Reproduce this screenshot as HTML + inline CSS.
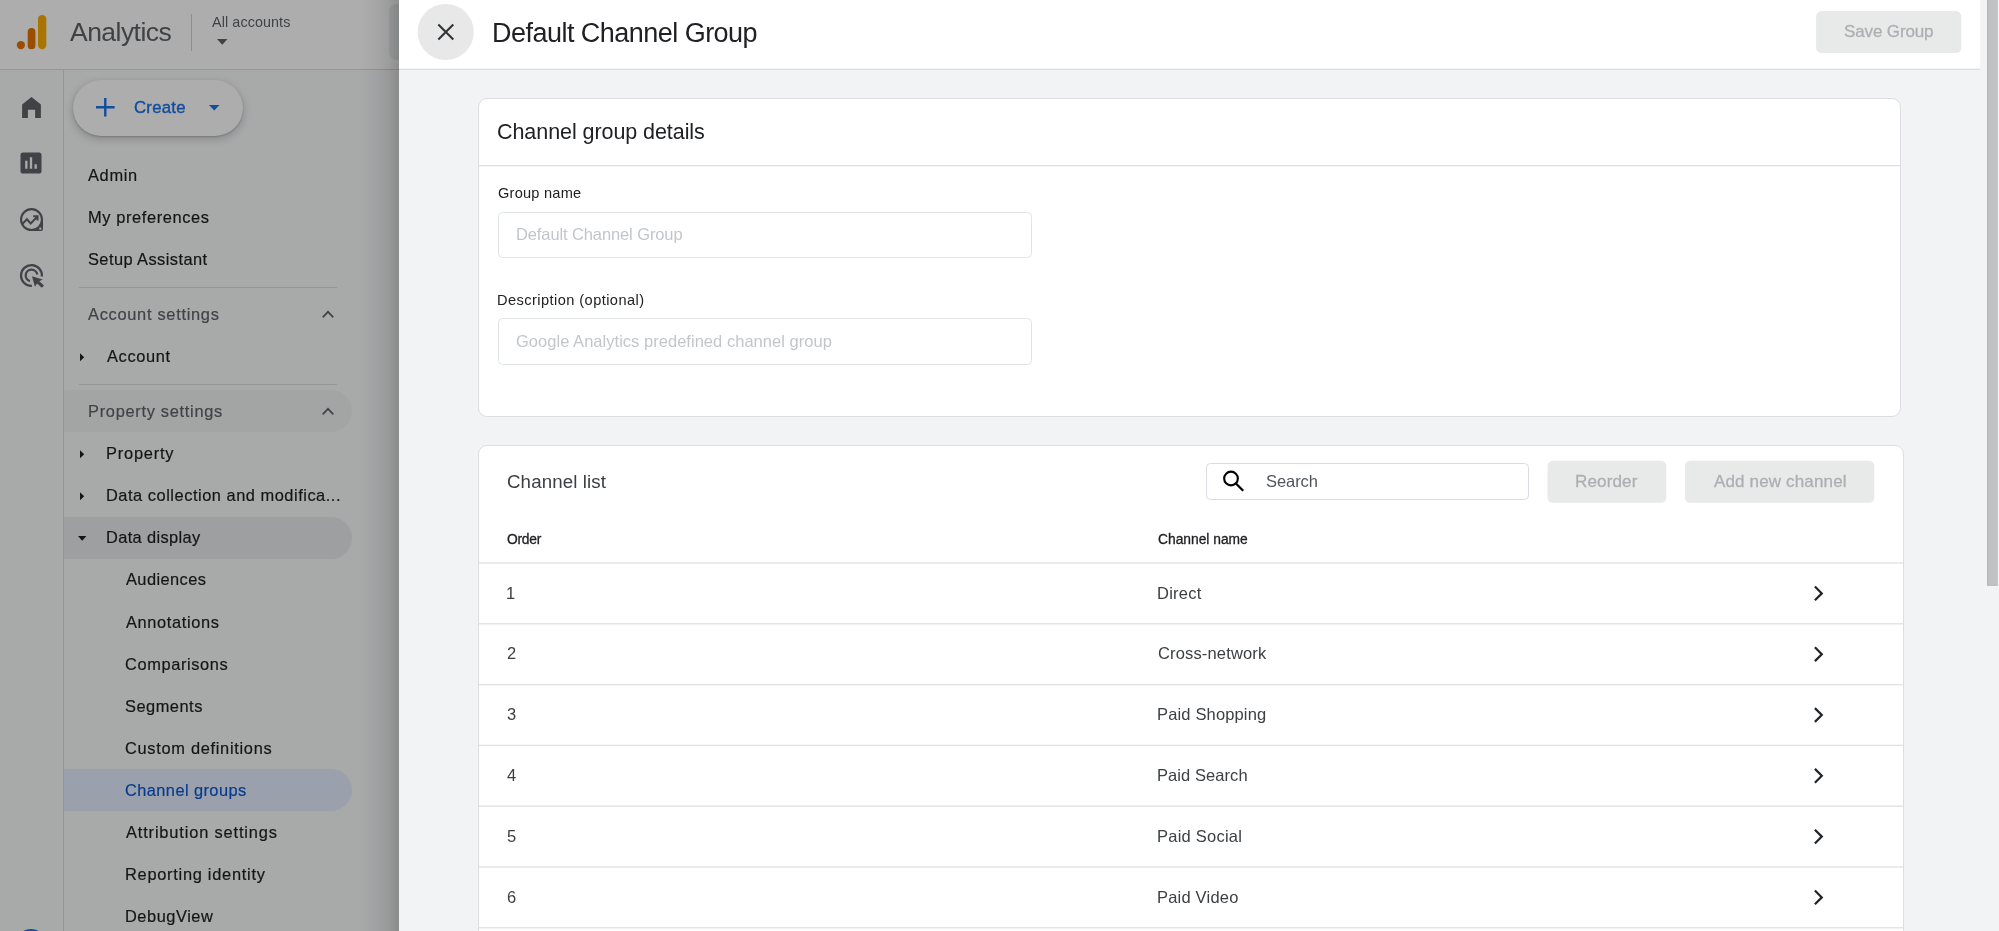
<!DOCTYPE html>
<html lang="en">
<head>
<meta charset="utf-8">
<title>Default Channel Group - Analytics</title>
<style>
html,body{margin:0;padding:0}
body{width:1999px;height:931px;overflow:hidden;position:relative;background:#f1f3f4;font-family:"Liberation Sans",sans-serif;}
.abs{position:absolute}
.t{position:absolute;white-space:nowrap;line-height:1;}
#left{position:absolute;left:0;top:0;width:399px;height:931px;overflow:hidden;background:#f8f9fa}
#lhead{position:absolute;left:0;top:0;width:399px;height:69px;background:#fff;border-bottom:1px solid #dadce0}
#rail{position:absolute;left:0;top:70px;width:63px;height:861px;border-right:1px solid #dadce0}
.pill{position:absolute;left:64px;width:288px;height:42px;border-radius:0 21px 21px 0}
.hr{position:absolute;left:79px;width:258px;height:1px;background:#dadce0}
#dim{position:absolute;left:0;top:0;width:399px;height:931px;background:rgba(0,0,0,.32)}
#shadow{position:absolute;left:359px;top:0;width:40px;height:931px;background:linear-gradient(to right,rgba(0,0,0,0),rgba(0,0,0,.03) 35%,rgba(0,0,0,.085) 70%,rgba(0,0,0,.18))}
#panel{position:absolute;left:399px;top:0;width:1600px;height:931px;background:#f1f3f4}
#phead{position:absolute;left:398px;top:0;width:1582px;height:69px;background:#fff;border-bottom:1px solid #dadce0}
.card{position:absolute;background:#fff;border:1px solid #dcdee2;border-radius:9px;box-sizing:border-box}
.inp{position:absolute;background:#fff;border:1px solid #e1e4e5;border-radius:4.5px;box-sizing:border-box}
.btn{position:absolute;background:#e8eaea;border-radius:5px}
.line{position:absolute;height:1px;background:#dadce0}
svg{position:absolute;overflow:visible}
</style>
</head>
<body>

<!-- ================= LEFT (dimmed app shell) ================= -->
<div id="left">
  <div id="lhead"></div>
  <div class="abs" style="left:389px;top:4px;width:60px;height:56px;border-radius:8px;background:#eef0f1"></div>
  <!-- logo -->
  <svg style="left:0;top:0" width="64" height="69" viewBox="0 0 64 69">
    <circle cx="20.9" cy="45.1" r="4.15" fill="#e37400"/>
    <rect x="27.7" y="28" width="7.7" height="21.25" rx="3.85" fill="#e37400"/>
    <rect x="38" y="14.9" width="8.3" height="34.35" rx="4.15" fill="#f9ab00"/>
  </svg>
  <div class="abs" style="left:191px;top:14px;width:1px;height:37px;background:#d0d2d6"></div>
  <svg style="left:217px;top:39.4px" width="10.5" height="5.8" viewBox="0 0 10.5 5.8"><path d="M0 0h10.5L5.25 5.8z" fill="#5f6368"/></svg>

  <div id="rail"></div>
  <!-- rail icons (28px material) -->
  <svg style="left:0;top:90px" width="64" height="40" viewBox="0 90 64 40"><path d="M22.1 118V104.6L31.5 97l9.4 7.6V118H35.1v-8.2h-7.2V118z" fill="#5f6368"/></svg>
  <svg style="left:17px;top:149.2px" width="28" height="28" viewBox="0 0 24 24"><path d="M19 3H5c-1.1 0-2 .9-2 2v14c0 1.1.9 2 2 2h14c1.1 0 2-.9 2-2V5c0-1.1-.9-2-2-2zM9 17H7v-7h2v7zm4 0h-2V7h2v10zm4 0h-2v-4h2v4z" fill="#5f6368"/></svg>
  <svg style="left:0;top:0" width="64" height="300" viewBox="0 0 64 300">
    <path fill="#5f6368" fill-rule="evenodd" d="M31.5 208.1A11.5 11.5 0 0 0 31.5 231.1H41A2 2 0 0 0 43 229.1V219.6A11.5 11.5 0 0 0 31.5 208.1zM31.5 210.2a9.4 9.4 0 1 1 0 18.8a9.4 9.4 0 1 1 0-18.8zM40.3 227.4a1.2 1.2 0 1 1 0 2.4a1.2 1.2 0 1 1 0-2.4z"/>
    <path fill="none" stroke="#5f6368" stroke-width="2" d="M22.5 223.9l4.4-4.6 3.8 4.2 6.6-6.9"/>
    <path fill="none" stroke="#5f6368" stroke-width="2.1" d="M33.2 216.2h4.3v4.4"/>
    <path fill="none" stroke="#5f6368" stroke-width="2.2" d="M41.9 276.5A10.45 10.45 0 1 0 31.86 285.94"/>
    <path fill="none" stroke="#5f6368" stroke-width="2.2" d="M37.3 274.5A5.85 5.85 0 1 0 29.9 281.1"/>
    <path fill="#5f6368" d="M32 276.3L42.7 279.4 39.3 281.2 44 285.6 41.8 287.8 37.1 283.4 34.9 286.8z"/>
  </svg>

  <!-- create pill -->
  <div class="abs" style="left:72.5px;top:79.5px;width:170.3px;height:56.6px;border-radius:28.3px;background:#fff;box-shadow:0 1px 2px rgba(0,0,0,.2),0 3px 7px 2px rgba(0,0,0,.13)"></div>
  <svg style="left:96px;top:98px" width="18.6" height="18.6" viewBox="0 0 18.6 18.6"><path d="M9.3 0v18.6M0 9.3h18.6" stroke="#1a73e8" stroke-width="2.4" fill="none"/></svg>
  <svg style="left:209.2px;top:105.4px" width="10.5" height="5.6" viewBox="0 0 10.5 5.6"><path d="M0 0h10.5L5.25 5.6z" fill="#1a73e8"/></svg>

  <!-- nav pills -->
  <div class="pill" style="top:390px;background:#f1f3f4"></div>
  <div class="pill" style="top:516.7px;background:#e8eaed"></div>
  <div class="pill" style="top:768.8px;height:42.6px;background:#e4eefe"></div>
  <div class="hr" style="top:287px"></div>
  <div class="hr" style="top:384px"></div>
  <!-- section chevrons -->
  <svg style="left:321.5px;top:309.7px" width="12" height="8" viewBox="0 0 12 8"><path d="M.7 7.3l5.3-5.5 5.3 5.5" fill="none" stroke="#5f6368" stroke-width="1.7"/></svg>
  <svg style="left:321.5px;top:406.7px" width="12" height="8" viewBox="0 0 12 8"><path d="M.7 7.3l5.3-5.5 5.3 5.5" fill="none" stroke="#5f6368" stroke-width="1.7"/></svg>
  <!-- tree arrows -->
  <svg style="left:80.2px;top:353.1px" width="4.2" height="8.3" viewBox="0 0 4.2 8"><path d="M0 0l4.2 4L0 8z" fill="#1f1f1f"/></svg>
  <svg style="left:80.2px;top:450.1px" width="4.2" height="8.3" viewBox="0 0 4.2 8"><path d="M0 0l4.2 4L0 8z" fill="#1f1f1f"/></svg>
  <svg style="left:80.2px;top:492.2px" width="4.2" height="8.3" viewBox="0 0 4.2 8"><path d="M0 0l4.2 4L0 8z" fill="#1f1f1f"/></svg>
  <svg style="left:77.8px;top:535.6px" width="8.4" height="4.8" viewBox="0 0 8.4 4.8"><path d="M0 0h8.4L4.2 4.8z" fill="#1f1f1f"/></svg>
  <!-- admin active circle (bottom, clipped) -->
  <div class="abs" style="left:15px;top:929.3px;width:32px;height:32px;border-radius:50%;background:#1a73e8"></div>
<div id="ltext" style="position:absolute;left:0;top:0;width:398px;height:931px;will-change:transform">
<span class="t" id="t0" style="left:70.00px;top:19px;font-size:26.5px;letter-spacing:-0.538px;color:#5f6368">Analytics</span>
<span class="t" id="t1" style="left:212.00px;top:15px;font-size:14.3px;letter-spacing:0.114px;color:#5f6368">All accounts</span>
<span class="t" id="t2" style="left:134.00px;top:100px;font-size:16.8px;letter-spacing:0.225px;-webkit-text-stroke:0.4px;color:#1a73e8">Create</span>
<span class="t" id="t3" style="left:88.00px;top:167px;font-size:16.4px;letter-spacing:0.669px;-webkit-text-stroke:0.2px;color:#1f1f1f">Admin</span>
<span class="t" id="t4" style="left:88.00px;top:209px;font-size:16.4px;letter-spacing:0.616px;-webkit-text-stroke:0.2px;color:#1f1f1f">My preferences</span>
<span class="t" id="t5" style="left:88.00px;top:251px;font-size:16.4px;letter-spacing:0.435px;-webkit-text-stroke:0.2px;color:#1f1f1f">Setup Assistant</span>
<span class="t" id="t6" style="left:88.00px;top:306px;font-size:16.4px;letter-spacing:0.707px;-webkit-text-stroke:0.2px;color:#5f6368">Account settings</span>
<span class="t" id="t7" style="left:107.00px;top:348px;font-size:16.4px;letter-spacing:0.650px;-webkit-text-stroke:0.2px;color:#1f1f1f">Account</span>
<span class="t" id="t8" style="left:88.00px;top:403px;font-size:16.4px;letter-spacing:0.708px;-webkit-text-stroke:0.2px;color:#5f6368">Property settings</span>
<span class="t" id="t9" style="left:106.00px;top:445px;font-size:16.4px;letter-spacing:0.791px;-webkit-text-stroke:0.2px;color:#1f1f1f">Property</span>
<span class="t" id="t10" style="left:106.00px;top:487px;font-size:16.4px;letter-spacing:0.527px;-webkit-text-stroke:0.2px;color:#1f1f1f">Data collection and modifica...</span>
<span class="t" id="t11" style="left:106.00px;top:529px;font-size:16.4px;letter-spacing:0.364px;-webkit-text-stroke:0.2px;color:#1f1f1f">Data display</span>
<span class="t" id="t12" style="left:126.00px;top:571px;font-size:16.4px;letter-spacing:0.418px;-webkit-text-stroke:0.2px;color:#1f1f1f">Audiences</span>
<span class="t" id="t13" style="left:126.00px;top:614px;font-size:16.4px;letter-spacing:0.630px;-webkit-text-stroke:0.2px;color:#1f1f1f">Annotations</span>
<span class="t" id="t14" style="left:125.00px;top:656px;font-size:16.4px;letter-spacing:0.612px;-webkit-text-stroke:0.2px;color:#1f1f1f">Comparisons</span>
<span class="t" id="t15" style="left:125.00px;top:698px;font-size:16.4px;letter-spacing:0.509px;-webkit-text-stroke:0.2px;color:#1f1f1f">Segments</span>
<span class="t" id="t16" style="left:125.00px;top:740px;font-size:16.4px;letter-spacing:0.695px;-webkit-text-stroke:0.2px;color:#1f1f1f">Custom definitions</span>
<span class="t" id="t17" style="left:125.00px;top:782px;font-size:16.4px;letter-spacing:0.418px;-webkit-text-stroke:0.2px;color:#0b57d0">Channel groups</span>
<span class="t" id="t18" style="left:126.00px;top:824px;font-size:16.4px;letter-spacing:0.845px;-webkit-text-stroke:0.2px;color:#1f1f1f">Attribution settings</span>
<span class="t" id="t19" style="left:125.00px;top:866px;font-size:16.4px;letter-spacing:0.725px;-webkit-text-stroke:0.2px;color:#1f1f1f">Reporting identity</span>
<span class="t" id="t20" style="left:125.00px;top:908px;font-size:16.4px;letter-spacing:0.532px;-webkit-text-stroke:0.2px;color:#1f1f1f">DebugView</span>
</div>
</div>
<div id="dim"></div>
<div id="shadow"></div>

<!-- ================= PANEL ================= -->
<div id="panel"></div>
<div class="card" style="left:478px;top:98px;width:1423px;height:319px"></div>
<div class="inp" style="left:498px;top:212px;width:534px;height:46px"></div>
<div class="inp" style="left:498px;top:318px;width:534px;height:47px"></div>
<div class="card" style="left:478px;top:445px;width:1426px;height:520px"></div>
<div class="inp" style="left:1206px;top:463px;width:323px;height:37px;border-color:#d9dce0"></div>
<svg style="left:0;top:0" width="1999" height="931" viewBox="0 0 1999 931">
  <!-- header -->
  <rect x="399" y="0" width="1581.2" height="68.7" fill="#fff"/>
  <rect x="399" y="68.7" width="1581.2" height="1.33" fill="#dcdee2"/>
  <!-- close button -->
  <circle cx="445.7" cy="32" r="28.1" fill="#e8e8e8"/>
  <path d="M438.3 24.6l15 14.8M453.3 24.6l-15 14.8" stroke="#30353a" stroke-width="2.1" fill="none"/>
  <!-- save button -->
  <rect x="1816.1" y="11.1" width="145.2" height="41.9" rx="5.3" fill="#e8eaea"/>
  <!-- scrollbar thumb -->
  <rect x="1987.2" y="0" width="10.6" height="585.7" fill="#c1c2c4"/>
  <rect x="1987.2" y="0" width="1.2" height="585.7" fill="#b2b3b5"/>
  <rect x="1987.2" y="584.6" width="10.6" height="1.1" fill="#b8b9bb"/>
  <!-- card 1 -->
  <rect x="479" y="165" width="1421" height="1.33" fill="#dfe1e5"/>
  <!-- search icon -->
  <circle cx="1231" cy="478.5" r="6.85" fill="none" stroke="#000" stroke-width="2.1"/>
  <path d="M1235.9 483.5l7.3 7.3" stroke="#000" stroke-width="2.3" fill="none"/>
  <rect x="1547.5" y="460.7" width="118.8" height="42" rx="5.3" fill="#e8eaea"/>
  <rect x="1684.9" y="460.7" width="189.4" height="42" rx="5.3" fill="#e8eaea"/>
    <rect x="479" y="562.34" width="1424" height="1.33" fill="#dfe1e5"/>
  <rect x="479" y="623.14" width="1424" height="1.33" fill="#dfe1e5"/>
  <rect x="479" y="683.94" width="1424" height="1.33" fill="#dfe1e5"/>
  <rect x="479" y="744.74" width="1424" height="1.33" fill="#dfe1e5"/>
  <rect x="479" y="805.54" width="1424" height="1.33" fill="#dfe1e5"/>
  <rect x="479" y="866.34" width="1424" height="1.33" fill="#dfe1e5"/>
  <rect x="479" y="927.14" width="1424" height="1.33" fill="#dfe1e5"/>
  <path d="M1814.9 586.50l6.9 6.9-6.9 6.9" fill="none" stroke="#202428" stroke-width="2.2"/>
  <path d="M1814.9 647.30l6.9 6.9-6.9 6.9" fill="none" stroke="#202428" stroke-width="2.2"/>
  <path d="M1814.9 708.10l6.9 6.9-6.9 6.9" fill="none" stroke="#202428" stroke-width="2.2"/>
  <path d="M1814.9 768.90l6.9 6.9-6.9 6.9" fill="none" stroke="#202428" stroke-width="2.2"/>
  <path d="M1814.9 829.70l6.9 6.9-6.9 6.9" fill="none" stroke="#202428" stroke-width="2.2"/>
  <path d="M1814.9 890.50l6.9 6.9-6.9 6.9" fill="none" stroke="#202428" stroke-width="2.2"/>

</svg>
<div id="ptext" style="position:absolute;left:0;top:0;width:1999px;height:931px;will-change:transform">
<span class="t" id="t21" style="left:492.00px;top:20px;font-size:27px;letter-spacing:-0.528px;color:#202124">Default Channel Group</span>
<span class="t" id="t22" style="left:1844.00px;top:23px;font-size:17px;letter-spacing:-0.135px;-webkit-text-stroke:0.3px;color:#acafb2">Save Group</span>
<span class="t" id="t23" style="left:497.00px;top:122px;font-size:21.5px;letter-spacing:-0.068px;color:#202124">Channel group details</span>
<span class="t" id="t24" style="left:498.00px;top:186px;font-size:14.6px;letter-spacing:0.226px;color:#202124">Group name</span>
<span class="t" id="t25" style="left:516.00px;top:226px;font-size:16.5px;letter-spacing:-0.110px;color:#c3c6c9">Default Channel Group</span>
<span class="t" id="t26" style="left:497.00px;top:293px;font-size:14.6px;letter-spacing:0.437px;color:#202124">Description (optional)</span>
<span class="t" id="t27" style="left:516.00px;top:333px;font-size:16.5px;letter-spacing:0.030px;color:#c3c6c9">Google Analytics predefined channel group</span>
<span class="t" id="t28" style="left:507.00px;top:473px;font-size:18.7px;letter-spacing:0.122px;color:#3c4043">Channel list</span>
<span class="t" id="t29" style="left:1266.00px;top:473px;font-size:16.5px;letter-spacing:-0.066px;color:#50565e">Search</span>
<span class="t" id="t30" style="left:1575.00px;top:473px;font-size:17px;letter-spacing:0.153px;-webkit-text-stroke:0.3px;color:#acafb2">Reorder</span>
<span class="t" id="t31" style="left:1714.00px;top:473px;font-size:17px;letter-spacing:0.152px;-webkit-text-stroke:0.3px;color:#acafb2">Add new channel</span>
<span class="t" id="t32" style="left:507.00px;top:533px;font-size:13.8px;letter-spacing:-0.229px;-webkit-text-stroke:0.3px;color:#202124">Order</span>
<span class="t" id="t33" style="left:1158.00px;top:533px;font-size:13.8px;-webkit-text-stroke:0.3px;color:#202124">Channel name</span>
<span class="t" id="t34" style="left:506.00px;top:585px;font-size:16.5px;color:#3c4043">1</span>
<span class="t" id="t35" style="left:1157.00px;top:585px;font-size:16.5px;letter-spacing:0.238px;color:#3c4043">Direct</span>
<span class="t" id="t36" style="left:507.00px;top:645px;font-size:16.5px;color:#3c4043">2</span>
<span class="t" id="t37" style="left:1158.00px;top:645px;font-size:16.5px;letter-spacing:0.152px;color:#3c4043">Cross-network</span>
<span class="t" id="t38" style="left:507.00px;top:706px;font-size:16.5px;color:#3c4043">3</span>
<span class="t" id="t39" style="left:1157.00px;top:706px;font-size:16.5px;letter-spacing:0.155px;color:#3c4043">Paid Shopping</span>
<span class="t" id="t40" style="left:507.00px;top:767px;font-size:16.5px;color:#3c4043">4</span>
<span class="t" id="t41" style="left:1157.00px;top:767px;font-size:16.5px;letter-spacing:0.070px;color:#3c4043">Paid Search</span>
<span class="t" id="t42" style="left:507.00px;top:828px;font-size:16.5px;color:#3c4043">5</span>
<span class="t" id="t43" style="left:1157.00px;top:828px;font-size:16.5px;letter-spacing:0.230px;color:#3c4043">Paid Social</span>
<span class="t" id="t44" style="left:507.00px;top:889px;font-size:16.5px;color:#3c4043">6</span>
<span class="t" id="t45" style="left:1157.00px;top:889px;font-size:16.5px;letter-spacing:0.203px;color:#3c4043">Paid Video</span>
</div>
</body>
</html>
